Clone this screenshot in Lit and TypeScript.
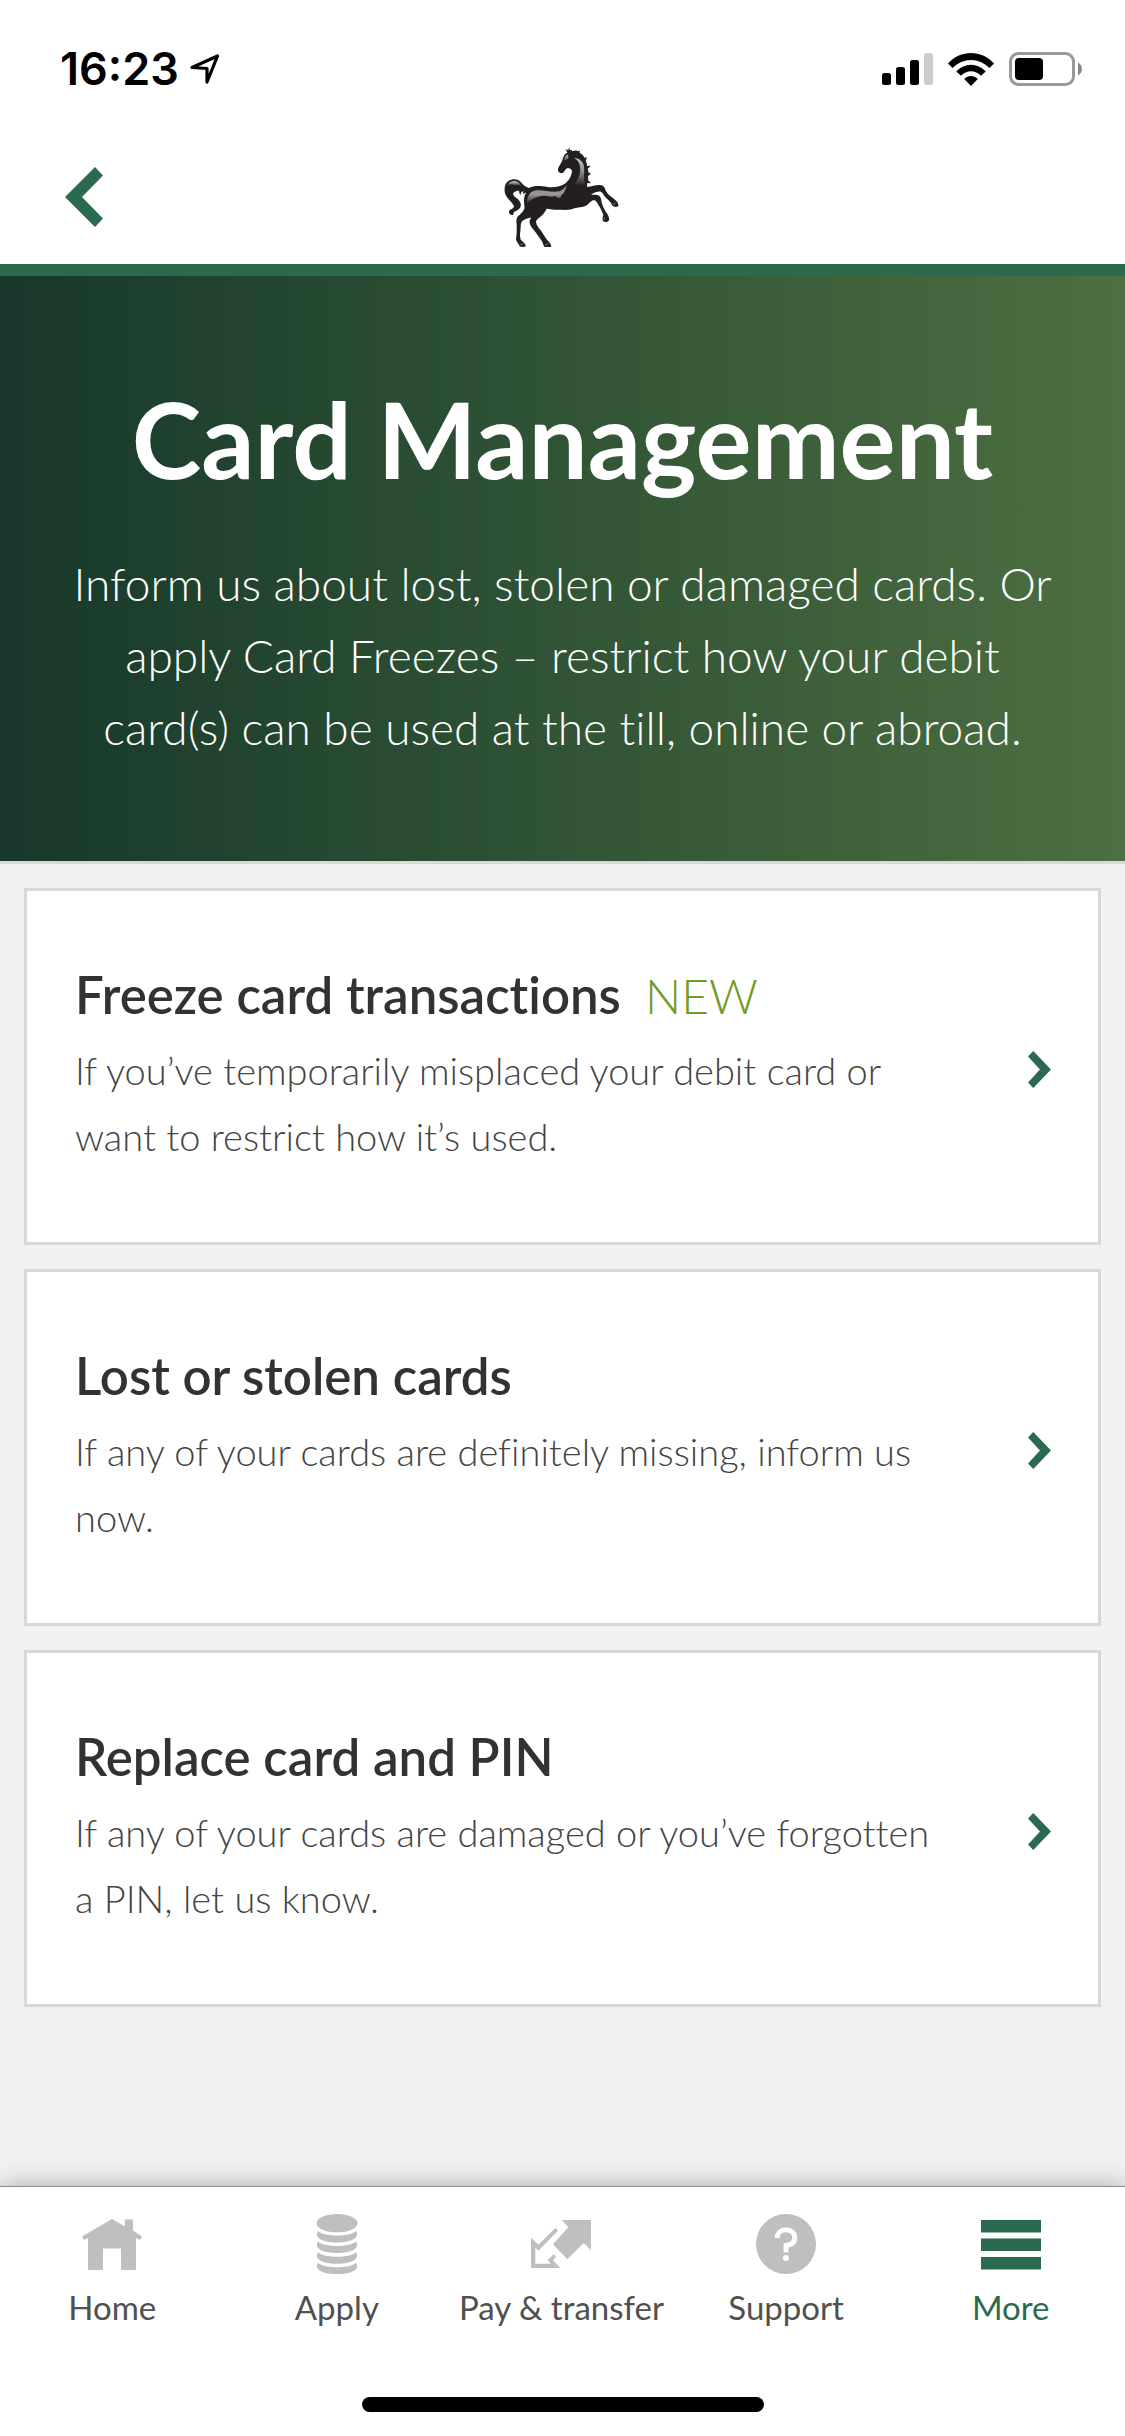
import { LitElement, html, css, svg, TemplateResult } from "lit";
import { customElement, property } from "lit/decorators.js";

interface CardLink {
  title: string;
  text: string;
  href: string;
  tag?: string;
}

const LINKS: CardLink[] = [
  {
    title: "Freeze card transactions",
    tag: "NEW",
    text: "If you’ve temporarily misplaced your debit card or want to restrict how it’s used.",
    href: "#freeze",
  },
  {
    title: "Lost or stolen cards",
    text: "If any of your cards are definitely missing, inform us now.",
    href: "#lost",
  },
  {
    title: "Replace card and PIN",
    text: "If any of your cards are damaged or you’ve forgotten a PIN, let us know.",
    href: "#replace",
  },
];

const COIN_EDGE = "M11 17C17 23 43 23 49 17C53 23 46 28.5 30 28.5C14 28.5 7 23 11 17Z";

const ICONS: Record<string, TemplateResult> = {
  home: svg`<path d="M30 5L43 12.5V5.5H51V16.5L60 22.5L58 26L54 24V56H39V34.5H21V56H6V24L2 26L0 22.5Z"/>`,
  coins: svg`<ellipse cx="30" cy="9.2" rx="20.5" ry="9.1"/>
    ${[0, 10.6, 21.2, 31.8].map((dy) => svg`<path d=${COIN_EDGE} transform="translate(0 ${dy})"/>`)}`,
  transfer: svg`<path d="M30.7 6H60V36L52.7 29L36.3 45.3L22 30.3L37.3 13.3Z"/>
    <path d="M0 23.7L7.3 30.7L24.7 13.8L27 16.7L7.3 36.7L4.3 33.3V49.7H19.7L16.7 46L22.7 40.3L25 43L22 46L29.3 54H0Z"/>`,
  help: svg`<circle cx="30" cy="30" r="30"/>
    <path d="M21.2 24C21.2 19 25 15.8 30 15.8C35.2 15.8 38.8 19.2 38.8 23.6C38.8 28.6 35 31 30 31.4V38.4" fill="none" stroke="#fff" stroke-width="5"/>
    <circle cx="30" cy="43.9" r="3" fill="#fff"/>`,
  menu: svg`<path d="M0 6H60V18.5H0ZM0 24.5H60V37H0ZM0 43H60V55.5H0Z"/>`,
};

const TABS = [
  { label: "Home", icon: "home", href: "#home" },
  { label: "Apply", icon: "coins", href: "#apply" },
  { label: "Pay & transfer", icon: "transfer", href: "#pay" },
  { label: "Support", icon: "help", href: "#support" },
  { label: "More", icon: "menu", href: "#more", active: true },
];

@customElement("status-bar")
export class StatusBar extends LitElement {
  static styles = css`
    :host {
      display: flex;
      align-items: center;
      justify-content: space-between;
      height: 138px;
      box-sizing: border-box;
      padding: 0 43px 0 60px;
      color: #000;
    }
    .left,
    .right {
      display: flex;
      align-items: center;
    }
    .left {
      gap: 10px;
    }
    .right {
      gap: 15px;
    }
    .time {
      font: 600 45px/54px Inter, "Liberation Sans", sans-serif;
    }
    svg {
      display: block;
    }
  `;

  render() {
    return html`
      <div class="left">
        <span class="time">16:23</span>
        <svg width="32" height="32" viewBox="0 0 32 32" aria-hidden="true">
          <path d="M3 14.5L28.5 3L18 29V15.5Z" fill="none" stroke="#000" stroke-width="3.2" stroke-linejoin="round"/>
        </svg>
      </div>
      <div class="right">
        <svg width="51" height="32" viewBox="0 0 51 32" aria-hidden="true">
          <rect x="0" y="20" width="9" height="12" rx="2.5"/>
          <rect x="14" y="14" width="9" height="18" rx="2.5"/>
          <rect x="28" y="7" width="9" height="25" rx="2.5"/>
          <rect x="42" y="0" width="9" height="32" rx="2.5" fill="#ccc"/>
        </svg>
        <svg width="46" height="33" viewBox="0 0 46 33" aria-hidden="true">
          <path d="M0 10.4C13 -3.4 33 -3.4 46 10.4L41.4 15C31 4.3 15 4.3 4.6 15Z"/>
          <path d="M8.3 18.4C16.5 9.4 29.5 9.4 37.7 18.4L33 22.8C27.4 16.8 18.6 16.8 13 22.8Z"/>
          <path d="M16.2 26C20 22 26 22 29.8 26L23 33Z"/>
        </svg>
        <svg width="73" height="34" viewBox="0 0 73 34" aria-hidden="true">
          <rect x="1.5" y="1.5" width="63" height="31" rx="8" fill="none" stroke="#999" stroke-width="3"/>
          <rect x="6" y="6" width="28" height="22" rx="4"/>
          <path d="M69 10.5C74.3 13 74.3 21 69 23.5Z" fill="#888"/>
        </svg>
      </div>
    `;
  }
}

@customElement("horse-logo")
export class HorseLogo extends LitElement {
  static styles = css`
    :host,
    svg {
      display: block;
    }
  `;

  render() {
    return html`
      <svg width="115" height="101" viewBox="43 36 345 303" role="img" aria-label="Black horse" overflow="visible">
        <defs>
          <linearGradient id="body" x1="0" y1="0" x2="0" y2="1">
            <stop offset="0" stop-color="#8d8d8f"/>
            <stop offset="0.5" stop-color="#98989a"/>
            <stop offset="1" stop-color="#2a2829"/>
          </linearGradient>
          <linearGradient id="neck" x1="0" y1="0" x2="0" y2="1">
            <stop offset="0" stop-color="#c4c4c5"/>
            <stop offset="0.5" stop-color="#8d8d8f"/>
            <stop offset="1" stop-color="#231f20"/>
          </linearGradient>
          <linearGradient id="tail" x1="0" y1="0" x2="0" y2="1">
            <stop offset="0" stop-color="#d0d0d0"/>
            <stop offset="1" stop-color="#231f20"/>
          </linearGradient>
        </defs>
        <path fill="#231f20" d="M235 37L238 46L243 44L244 49C252 46 259 46 263 49L268 47L267 54C274 57 279 62 281 68L289 67L285 78C288 82 289 88 289 93L300 92L291 102C293 106 293 109 293 112L301 116L292 123C293 128 293 131 292 135L301 145L290 144C289 149 289 153 290 156C303 154 314 151 325 150C333 149 339 152 342 159C345 167 349 174 355 180L374 195C380 200 384 207 383 213C379 217 370 216 366 213C363 205 357 198 349 191C341 184 338 176 331 170C322 168 312 172 301 179C310 179 318 179 323 181C330 184 331 190 332 197C334 209 340 221 346 232C352 239 357 249 355 256C351 263 342 262 337 259C335 253 335 246 338 240C336 231 329 219 323 209C318 200 315 195 308 196C299 198 296 207 286 212C275 218 262 216 251 220C238 227 217 224 201 224C190 224 179 222 168 221C163 230 159 237 152 243C144 249 138 253 136 260C137 270 144 278 150 286C158 298 164 308 170 316C175 321 182 327 182 335C174 337 166 336 161 335C157 329 157 323 153 317C146 307 138 297 130 286C122 277 115 267 117 258C118 254 120 251 121 247C113 250 102 252 94 259C89 264 91 276 89 288C87 299 88 307 90 314C95 319 104 325 106 334C99 337 91 336 87 334C84 325 76 319 76 311C79 296 78 282 78 269C76 259 77 250 82 244C89 237 98 230 101 221C102 213 100 207 100 199C100 189 101 180 106 174C103 172 100 174 100 179C96 175 97 171 99 169C93 169 90 173 90 180C85 176 85 170 86 167C79 167 71 168 68 174C66 184 76 187 84 195C91 203 93 212 87 220C81 228 72 229 70 231C67 234 70 239 67 240C58 242 53 234 55 229C58 222 69 222 70 214C66 202 50 193 44 178C39 162 42 146 53 138C66 129 83 132 91 142C97 150 104 156 115 159C132 150 153 154 170 156C189 158 206 156 220 148C233 140 243 124 244 108C242 101 236 100 231 99C225 102 222 107 219 112C213 117 205 114 202 107C201 99 206 92 210 86C213 80 216 74 217 69C219 60 224 56 230 53L225 42L233 46Z"/>
        <path fill="url(#tail)" d="M50 151C58 134 81 135 88 147L92 154C82 148 76 153 70 150C62 147 56 147 50 151Z"/>
        <path fill="url(#body)" d="M109 205C109 184 118 168 137 166C158 164 187 174 208 168C218 164 223 156 228 151C225 166 220 176 211 181C214 187 208 190 200 188L194 183C183 188 174 183 160 182C139 183 121 193 109 205Z"/>
        <path fill="url(#neck)" d="M249 68C263 69 277 76 280 94C282 111 278 131 283 151C271 156 260 151 250 149C262 135 271 116 268 95C266 81 260 74 249 68Z"/>
        <path fill="url(#tail)" d="M219 79C220 68 225 61 231 59C235 65 235 70 228 74C225 75 222 77 219 79Z"/>
        <path fill="none" stroke="#aaa" stroke-width="2" d="M89 329L97 326M164 330L173 326M367 209L374 204M340 255L341 247"/>
      </svg>
    `;
  }
}

@customElement("link-card")
export class LinkCard extends LitElement {
  static styles = css`
    :host {
      display: block;
    }
    .card {
      display: flex;
      align-items: center;
      gap: 75px;
      padding: 71px 47px 73px 48px;
      border: 3px solid #d8d8d8;
      background: #fff;
      color: #444;
      text-decoration: none;
    }
    .body {
      flex: 1;
      min-width: 0;
      display: flex;
      flex-direction: column;
      gap: 9px;
    }
    .heading {
      display: flex;
      align-items: baseline;
      gap: 24px;
      height: 66px;
    }
    .title {
      margin: 0;
      font-size: 51px;
      font-weight: 600;
      line-height: 66px;
      color: #323233;
    }
    .tag {
      font-size: 48px;
      font-weight: 300;
      line-height: 66px;
      color: #6f9b26;
    }
    .text {
      margin: 0;
      font-size: 38px;
      font-weight: 300;
      line-height: 66px;
    }
    .chevron {
      display: block;
      flex: none;
      padding-top: 8px;
      fill: #2c6a50;
    }
  `;

  @property({ attribute: false }) item!: CardLink;

  render() {
    const { title, text, href, tag } = this.item;
    return html`
      <a class="card" href=${href}>
        <div class="body">
          <div class="heading">
            <h2 class="title">${title}</h2>
            ${tag ? html`<span class="tag">${tag}</span>` : null}
          </div>
          <p class="text">${text}</p>
        </div>
        <svg class="chevron" width="23" height="37" viewBox="0 0 23 37" aria-hidden="true">
          <path d="M5.3 0L23 18.5L5.3 37L0 31.5L12 18.5L0 5.5Z"/>
        </svg>
      </a>
    `;
  }
}

@customElement("tab-bar")
export class TabBar extends LitElement {
  static styles = css`
    :host {
      display: block;
      border-top: 1px solid #8a8b8c;
      background: #fff;
      box-shadow: 0 0 24px rgba(0, 0, 0, 0.3);
    }
    .tabs {
      display: grid;
      grid-template-columns: repeat(5, 1fr);
      padding: 27px 2px 0 0;
    }
    .tab {
      display: flex;
      flex-direction: column;
      align-items: center;
      gap: 13px;
      font-size: 33px;
      font-weight: 400;
      line-height: 40px;
      white-space: nowrap;
      color: #505050;
      text-decoration: none;
    }
    .icon {
      display: block;
      fill: #bfbfbf;
    }
    .active {
      color: #2c6a50;
    }
    .active .icon {
      fill: #2c6a50;
    }
    .indicator {
      width: 402px;
      height: 15px;
      margin: 70px auto 0;
      border-radius: 8px;
      background: #000;
    }
    .safe-area {
      padding-bottom: 24px;
    }
  `;

  render() {
    return html`
      <nav class="tabs" aria-label="Main">
        ${TABS.map(
          (tab) => html`
            <a class="tab ${tab.active ? "active" : ""}" href=${tab.href}>
              <svg class="icon" width="60" height="60" viewBox="0 0 60 60" aria-hidden="true">${ICONS[tab.icon]}</svg>
              <span>${tab.label}</span>
            </a>
          `,
        )}
      </nav>
      <div class="safe-area"><div class="indicator"></div></div>
    `;
  }
}

@customElement("app-root")
export class AppRoot extends LitElement {
  static styles = css`
    :host {
      display: flex;
      flex-direction: column;
      min-height: 100vh;
      background: #f0f1f3;
      font-family: Lato, "Open Sans", sans-serif;
      font-variant-ligatures: none;
      overflow-x: hidden;
    }
    .top {
      background: #fff;
      border-bottom: 12px solid #2c6a50;
    }
    .bar {
      display: grid;
      grid-template-columns: 1fr auto 1fr;
      align-items: center;
      height: 118px;
      padding: 0 65px 8px;
    }
    .back {
      justify-self: start;
      padding: 0;
      border: 0;
      background: none;
      cursor: pointer;
    }
    .back svg {
      display: block;
      fill: #2c6a50;
    }
    .hero {
      padding: 100px 60px 97px;
      border-bottom: 3px solid #d8d8d8;
      background: linear-gradient(90deg, #17382b, #305435 50%, #4d6f41);
      color: #fff;
      text-align: center;
    }
    .title {
      margin: 0 0 48px;
      font-size: 105px;
      font-weight: 700;
      line-height: 124px;
    }
    .intro {
      margin: 0;
      font-size: 46px;
      font-weight: 300;
      line-height: 72px;
    }
    .list {
      flex: 1;
      display: flex;
      flex-direction: column;
      gap: 24px;
      padding: 24px;
    }
  `;

  render() {
    return html`
      <header class="top">
        <status-bar></status-bar>
        <div class="bar">
          <button class="back" type="button" aria-label="Back">
            <svg width="38" height="60" viewBox="0 0 38 60" aria-hidden="true">
              <path d="M0 30L30 0L38 8.5L17 30L38 51.5L30 60Z"/>
            </svg>
          </button>
          <horse-logo></horse-logo>
        </div>
      </header>
      <section class="hero">
        <h1 class="title">Card Management</h1>
        <p class="intro">
          Inform us about lost, stolen or damaged cards. Or apply Card Freezes – restrict how your debit card(s) can be
          used at the till, online or abroad.
        </p>
      </section>
      <main class="list">${LINKS.map((item) => html`<link-card .item=${item}></link-card>`)}</main>
      <tab-bar></tab-bar>
    `;
  }
}
